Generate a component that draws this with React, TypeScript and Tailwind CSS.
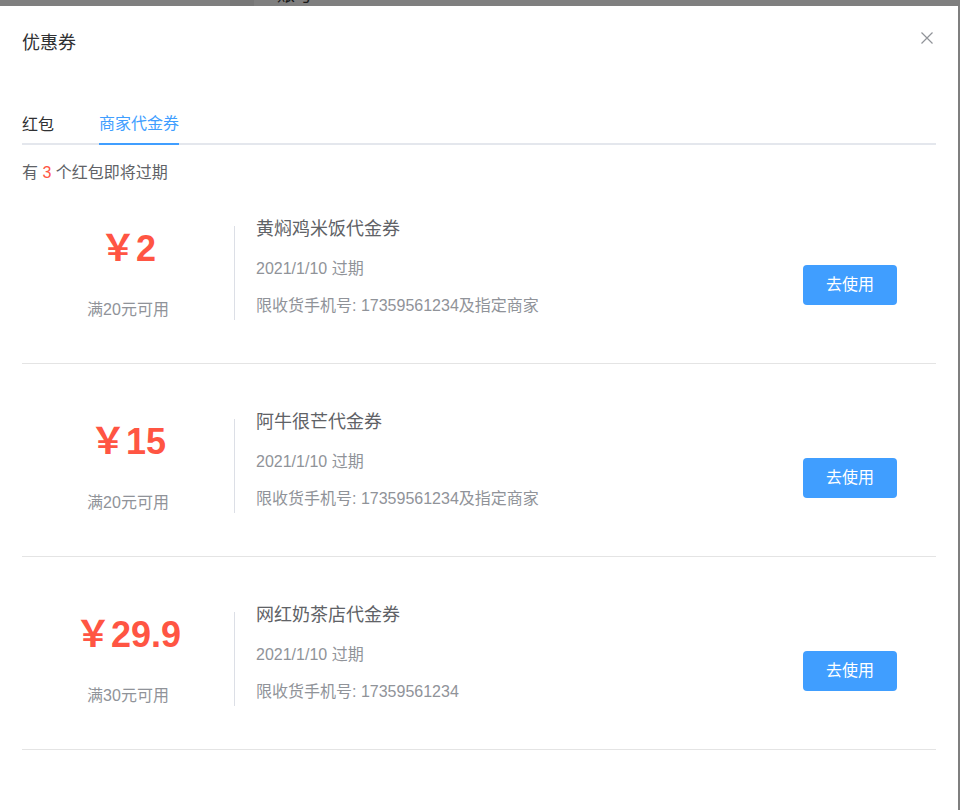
type Coupon = {
  price: string
  cond: string
  name: string
  expire: string
  limit: string
}

const coupons: Coupon[] = [
  { price: "2", cond: "满20元可用", name: "黄焖鸡米饭代金券", expire: "2021/1/10 过期", limit: "限收货手机号: 17359561234及指定商家" },
  { price: "15", cond: "满20元可用", name: "阿牛很芒代金券", expire: "2021/1/10 过期", limit: "限收货手机号: 17359561234及指定商家" },
  { price: "29.9", cond: "满30元可用", name: "网红奶茶店代金券", expire: "2021/1/10 过期", limit: "限收货手机号: 17359561234" },
]

export default function App() {
  return (
    <div
      className="relative h-[810px] w-[960px] overflow-hidden bg-[#7f7f7f]"
      style={{ fontFamily: '"Liberation Sans", "Noto Sans CJK SC", sans-serif' }}
    >
      {/* page behind the mask, only a sliver shows */}
      <div className="relative flex h-[6px]">
        <div className="ml-[230px] w-[24px] bg-[#777777]" />
        <div className="absolute left-[277px] top-[-15px] text-[18px] leading-[20px] text-[#1a1a1a]">账号</div>
      </div>

      {/* dialog */}
      <div className="h-[804px] w-[958px] bg-white">
        {/* header */}
        <div className="flex items-start justify-between pl-[22px] pr-[25px] pt-[25px]">
          <div className="text-[18px] font-normal leading-[24px] text-[#303133]">优惠券</div>
          <svg className="mt-[1px]" width="12" height="12" viewBox="0 0 12 12" fill="none">
            <path d="M0.5 0.5 L11.5 11.5 M11.5 0.5 L0.5 11.5" stroke="#909399" strokeWidth="1.2" />
          </svg>
        </div>

        <div className="px-[22px]">
          {/* tabs */}
          <div className="mt-[50px] flex h-[40px] border-b-2 border-[#e4e7ed] text-[16px]">
            <div className="flex h-[40px] items-center pr-[45px] text-[#303133]">红包</div>
            <div className="-mb-[2px] flex h-[40px] items-center border-b-2 border-[#409eff] text-[#409eff]">
              商家代金券
            </div>
          </div>

          <div className="mt-[17px] text-[16px] leading-[22px] text-[#606266]">
            有 <span className="text-[#ff5543]">3</span> 个红包即将过期
          </div>

          {/* list */}
          <div>
            {coupons.map((c, i) => (
              <div
                key={i}
                className={`flex items-start border-b border-[#e4e4e4] pb-[43px] ${i === 0 ? "pt-[33px]" : "pt-[46px]"}`}
              >
                <div className="flex h-[103px] w-[212px] flex-col items-center">
                  <div className="mt-[9px] text-[36px] font-bold leading-[46px] text-[#ff5543]">
                    ￥{c.price}
                  </div>
                  <div className="mt-[27px] text-[16px] leading-[22px] text-[#909399]">{c.cond}</div>
                </div>
                <div className="mt-[9px] h-[94px] w-px bg-[#dcdfe6]" />
                <div className="flex-1 pl-[21px]">
                  <div className="text-[18px] leading-[24px] text-[#606266]">{c.name}</div>
                  <div className="mt-[17px] text-[16px] leading-[22px] text-[#909399]">{c.expire}</div>
                  <div className="mt-[15px] text-[16px] leading-[22px] text-[#909399]">{c.limit}</div>
                </div>
                <button className="mr-[39px] mt-[48px] h-[40px] w-[94px] rounded-[4px] bg-[#409eff] text-[16px] text-white">
                  去使用
                </button>
              </div>
            ))}
          </div>
        </div>
      </div>
    </div>
  )
}
